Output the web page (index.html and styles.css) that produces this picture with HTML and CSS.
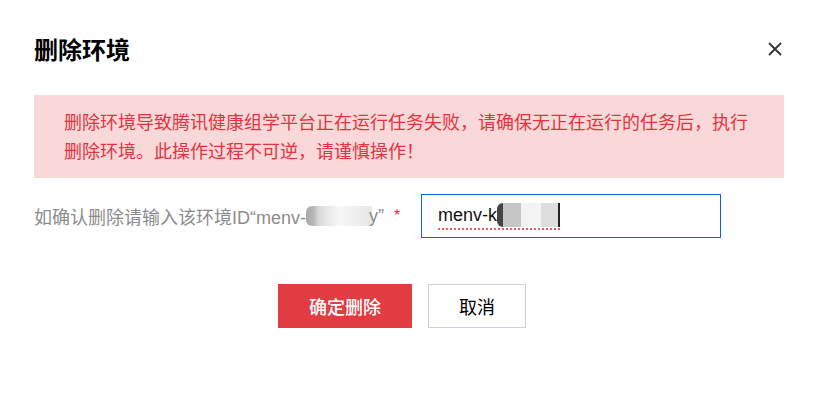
FILE: index.html
```html
<!DOCTYPE html>
<html lang="zh-CN">
<head>
<meta charset="utf-8">
<link rel="stylesheet" href="styles.css">
</head>
<body>
<div class="dialog">
  <div class="header">
    <h1 class="title">删除环境</h1>
    <button class="close" aria-label="关闭">
      <svg width="14" height="14" viewBox="0 0 14 14"><path d="M1.5 1.5L12.5 12.5M12.5 1.5L1.5 12.5" stroke="#333" stroke-width="1.8" stroke-linecap="round" fill="none"/></svg>
    </button>
  </div>
  <div class="alert">删除环境导致腾讯健康组学平台正在运行任务失败，请确保无正在运行的任务后，执行删除环境。此操作过程不可逆，请谨慎操作！</div>
  <div class="form-row">
    <label class="label">如确认删除请输入该环境ID“menv-<span class="blur-label"></span>y” <span class="req">*</span></label>
    <div class="input"><span class="typed">menv-k<span class="blur-input"><i class="b1"></i><i class="b2"></i><i class="b3"></i><i class="b4"></i></span></span></div>
  </div>
  <div class="actions">
    <button class="btn btn-danger">确定删除</button>
    <button class="btn btn-default">取消</button>
  </div>
</div>
</body>
</html>
```
FILE: styles.css
```css
* { box-sizing: border-box; }
html, body { margin: 0; padding: 0; background: #fff; }
body {
  font-family: "Liberation Sans", "Noto Sans CJK SC", sans-serif;
  color: #000;
}
.dialog {
  width: 816px;
  height: 404px;
  padding: 33px 32px 0 34px;
}
.header {
  display: flex;
  align-items: center;
  justify-content: space-between;
  height: 32px;
}
.title {
  margin: 0;
  font-size: 24px;
  line-height: 32px;
  font-weight: 700;
  font-family: "Noto Sans CJK SC", sans-serif;
  color: #000;
}
.close {
  border: 0;
  background: none;
  padding: 0;
  margin-right: 2px;
  width: 14px;
  height: 14px;
  display: flex;
}
.alert {
  margin-top: 30px;
  background: #f9d8da;
  color: #e3343e;
  font-family: "Noto Sans CJK SC", sans-serif;
  font-size: 18px;
  line-height: 29px;
  padding: 12px 30px 12px 30px;
  height: 83px;
}
.form-row {
  display: flex;
  align-items: center;
  margin-top: 16px;
  height: 44px;
}
.label {
  font-size: 18px;
  color: #8c8c8c;
  font-family: "Liberation Sans", "Noto Sans CJK SC", sans-serif;
  width: 387px;
  white-space: nowrap;
  display: flex;
  align-items: center;
}
.blur-label {
  display: inline-block;
  width: 66px;
  height: 20px;
  background: linear-gradient(90deg, #a9a9a9 0, #b9b9b9 8px, #d6d6d6 12px, #e9e9e9 22px, #f7f7f7 34px, #eeeeee 50px, #e6e6e6 66px);
  border-radius: 6px 2px 2px 6px;
  margin-right: -3px;
}
.req { color: #e3343e; margin-left: 10px; font-size: 16px; }
.input {
  width: 300px;
  height: 44px;
  border: 1px solid #0a62e0;
  padding-left: 16px;
  display: flex;
  align-items: center;
  font-size: 18px;
  color: #111;
}
.typed {
  display: inline-flex;
  align-items: center;
  border-bottom: 2px dotted #f05a5a;
  line-height: 22px;
  padding-bottom: 1px;
}
.blur-input { display: inline-flex; height: 24px; align-items: stretch; margin-left: 0; }
.blur-input i { display: block; height: 24px; }
.blur-input .b1 { width: 6px; background: #444; border-radius: 6px 0 0 6px; }
.blur-input .b2 { width: 18px; background: #c6c6c6; }
.blur-input .b3 { width: 20px; background: #f3f3f3; }
.blur-input .b4 { width: 19px; background: #dddddd; border-right: 2px solid #222; }
.actions {
  display: flex;
  justify-content: flex-start;
  gap: 16px;
  margin-top: 46px;
  padding-left: 244px;
}
.btn {
  height: 44px;
  font-size: 18px;
  font-family: "Noto Sans CJK SC", sans-serif;
  border-radius: 0;
  cursor: pointer;
}
.btn-danger {
  width: 134px;
  background: #e03c42;
  color: #fff;
  border: 0;
  font-weight: 500;
}
.btn-default {
  width: 98px;
  background: #fff;
  border: 1px solid #cdd0d8;
  color: #000;
}
```
